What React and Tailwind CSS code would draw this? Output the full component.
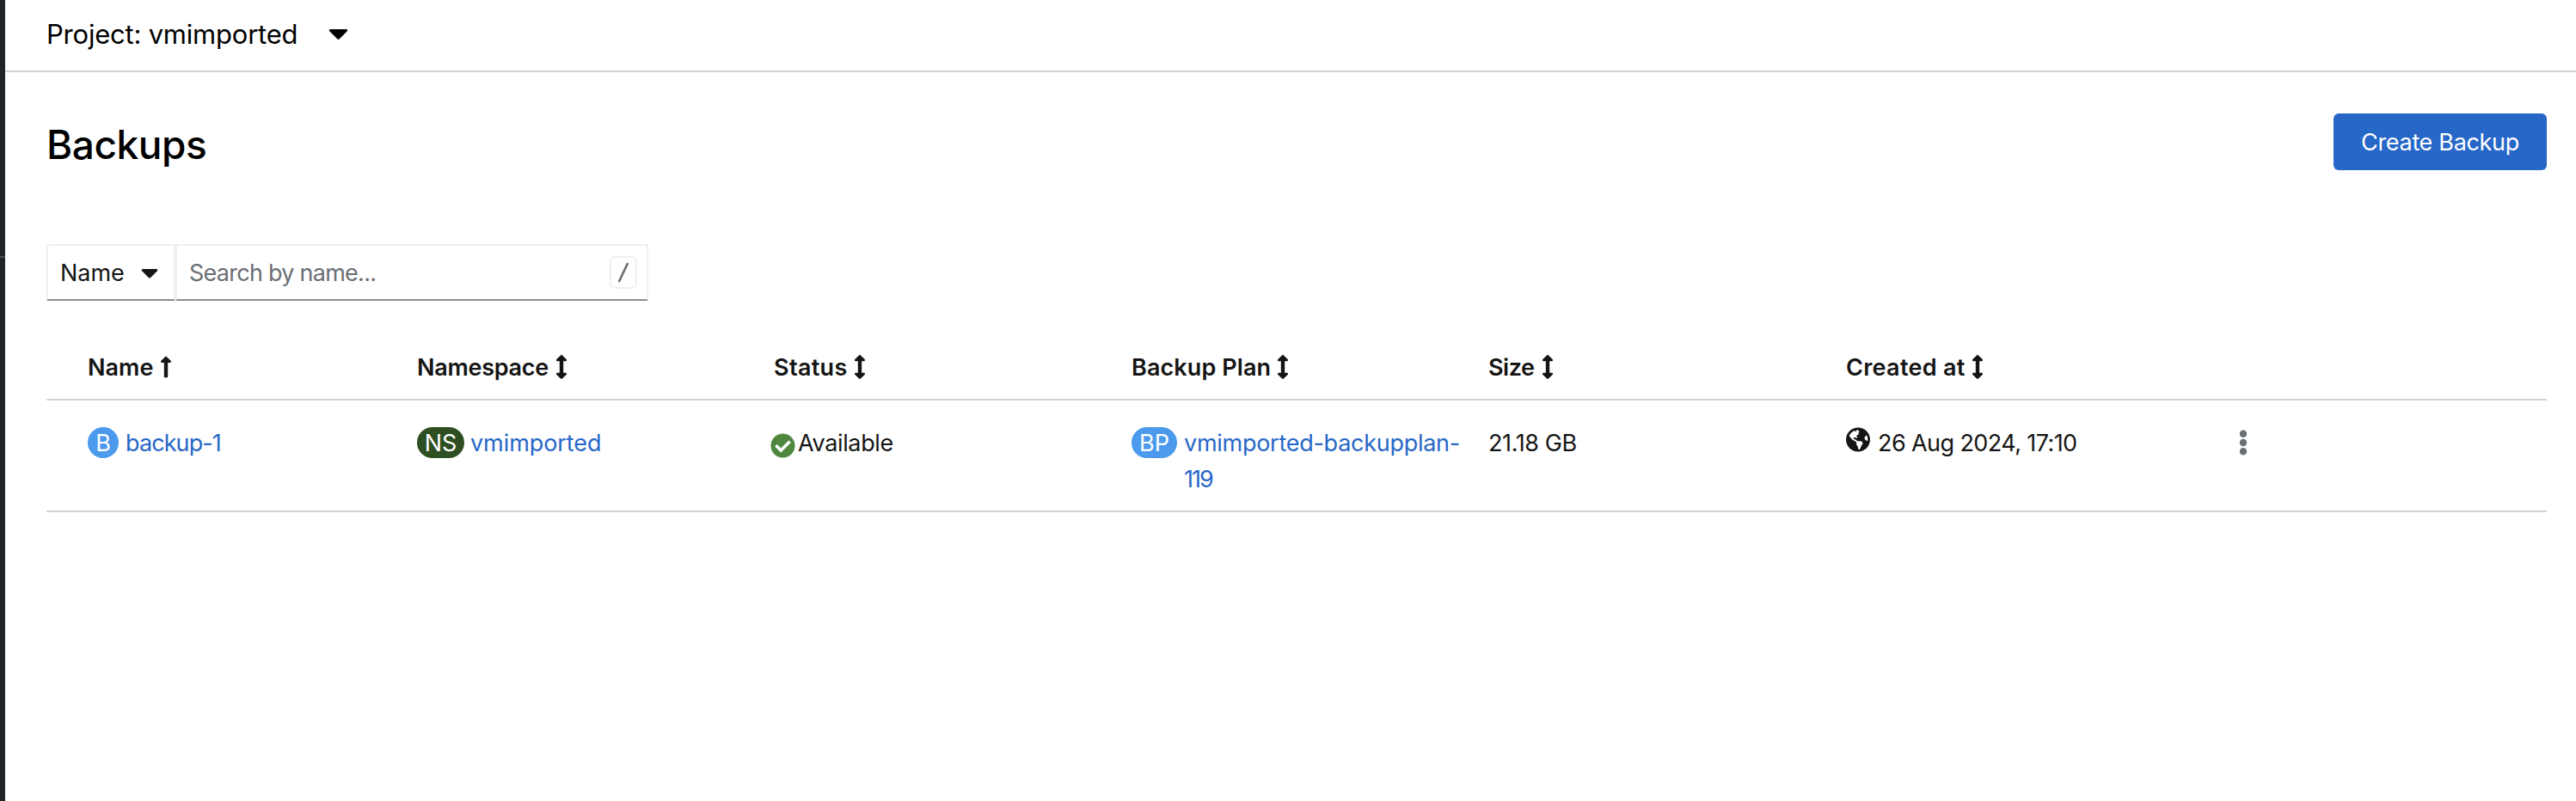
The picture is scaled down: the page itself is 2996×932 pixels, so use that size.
import {
  FaArrowsAltV,
  FaCaretDown,
  FaCheckCircle,
  FaEllipsisV,
  FaGlobeAmericas,
  FaLongArrowAltUp,
} from 'react-icons/fa';

const columns = [
  { label: 'Name', tracking: 'tracking-[0.06px]', gap: 'ml-[7px]', sorted: true },
  { label: 'Namespace', tracking: 'tracking-[-0.28px]', gap: 'ml-[8px]' },
  { label: 'Status', tracking: 'tracking-[0.34px]', gap: 'ml-[7px]' },
  { label: 'Backup Plan', tracking: 'tracking-[0.1px]', gap: 'ml-[7px]' },
  { label: 'Size', tracking: 'tracking-[-0.46px]', gap: 'ml-[8px]' },
  { label: 'Created at', tracking: 'tracking-[0.29px]', gap: 'ml-[7px]' },
];

const gridColumns = 'grid grid-cols-[383px_415px_416px_415px_416px_450px_1fr] pl-12';

function ProjectBar() {
  return (
    <div className="flex h-[84px] items-start border-b-2 border-[#d2d2d2] pl-12">
      <span className="mt-[19px] text-[31px] leading-[42px] tracking-[-0.22px] text-black">Project: vmimported</span>
      <FaCaretDown className="mt-[20px] ml-[36px] h-[37px] w-[23px] text-black" />
    </div>
  );
}

function PageHeader() {
  return (
    <div className="flex h-[200px] items-start justify-between pr-[34px] pl-12">
      <h1 className="mt-[54px] text-[46px] leading-[60px] font-medium tracking-[-0.47px] text-black">Backups</h1>
      <button className="mt-12 h-[66px] w-[248px] rounded-[6px] bg-[#2767c7] pt-[2px] text-[27px] leading-[42px] tracking-[-0.33px] text-white">
        Create Backup
      </button>
    </div>
  );
}

function Filters() {
  return (
    <div className="flex h-[66px] pl-12 leading-[42px]">
      <div className="flex w-[150px] items-center border-2 border-[#f0f0f0] border-b-[#8a8d90] pl-[14px]">
        <span className="pt-[2px] tracking-[-0.06px]">Name</span>
        <FaCaretDown className="ml-[19px] h-8 w-5" />
      </div>
      <div className="flex w-[550px] items-center justify-between border-2 border-[#f0f0f0] border-b-[#8a8d90] pr-[11px] pl-[14px] text-[#6a6e73]">
        <span className="pt-[2px] tracking-[-0.74px]">Search by name...</span>
        <kbd className="flex h-[38px] w-8 items-center justify-center rounded-[6px] border-2 border-[#f0f0f0]">
          <svg className="h-6 w-4" viewBox="0 0 16 24" fill="none" stroke="currentColor" strokeWidth="2.6">
            <path d="M2.8 23 13.2 1" />
          </svg>
        </kbd>
      </div>
    </div>
  );
}

function Badge({ children, className }) {
  return (
    <span className={`mt-[2px] h-9 shrink-0 rounded-full text-center leading-[38px] text-white ${className}`}>
      {children}
    </span>
  );
}

function BackupsTable() {
  return (
    <div className="mr-[34px] ml-12">
      <div className={`${gridColumns} h-[116px] items-end border-b-2 border-[#d2d2d2] pb-[15px] leading-[42px] font-semibold`}>
        {columns.map((c) => (
          <div key={c.label} className="flex items-center">
            <span className={c.tracking}>{c.label}</span>
            {c.sorted ? (
              <FaLongArrowAltUp className={`${c.gap} -mt-[2px] h-7 w-[14px]`} />
            ) : (
              <FaArrowsAltV className={`${c.gap} -mt-[2px] h-7 w-[14px]`} />
            )}
          </div>
        ))}
      </div>
      <div className={`${gridColumns} h-[130px] items-start border-b-2 border-[#d2d2d2] pt-[29px] leading-[42px]`}>
        <div className="flex items-start">
          <Badge className="w-9 bg-[#4b9aec]">B</Badge>
          <a className="ml-2 tracking-[-0.9px] text-[#2767c7]">backup-1</a>
        </div>
        <div className="flex items-start">
          <Badge className="w-[55px] bg-[#2d4e20]">NS</Badge>
          <a className="ml-[7px] tracking-[-0.07px] text-[#2767c7]">vmimported</a>
        </div>
        <div className="-ml-1 flex items-start">
          <FaCheckCircle className="mt-[9px] size-[29px] text-[#50873f]" />
          <span className="ml-[3px] tracking-[-0.35px]">Available</span>
        </div>
        <div className="flex items-start">
          <Badge className="w-[53px] bg-[#4b9aec]">BP</Badge>
          <a className="ml-2 text-[#2767c7]">
            <span className="block tracking-[-0.27px]">vmimported-backupplan-</span>
            <span className="block tracking-[-1.97px]">119</span>
          </a>
        </div>
        <div className="tracking-[-0.39px]">21.18 GB</div>
        <div className="flex items-start">
          <FaGlobeAmericas className="mt-[2px] h-[29px] w-7" />
          <span className="ml-[9px] tracking-[-0.59px]">26 Aug 2024, 17:10</span>
        </div>
        <div className="flex">
          <FaEllipsisV className="mt-[5px] ml-[6px] h-[30px] w-[12px] text-[#6a6e73]" />
        </div>
      </div>
    </div>
  );
}

export default function App() {
  return (
    <div className="flex h-[932px] w-[2996px] overflow-hidden bg-white font-[Inter,sans-serif] text-[27px] text-[#151515]">
      <aside className="w-[6px] shrink-0 bg-[#212427] pt-[298px]">
        <div className="h-[2px] bg-[#4a4c50]" />
      </aside>
      <main className="flex-1">
        <ProjectBar />
        <PageHeader />
        <Filters />
        <BackupsTable />
      </main>
    </div>
  );
}
